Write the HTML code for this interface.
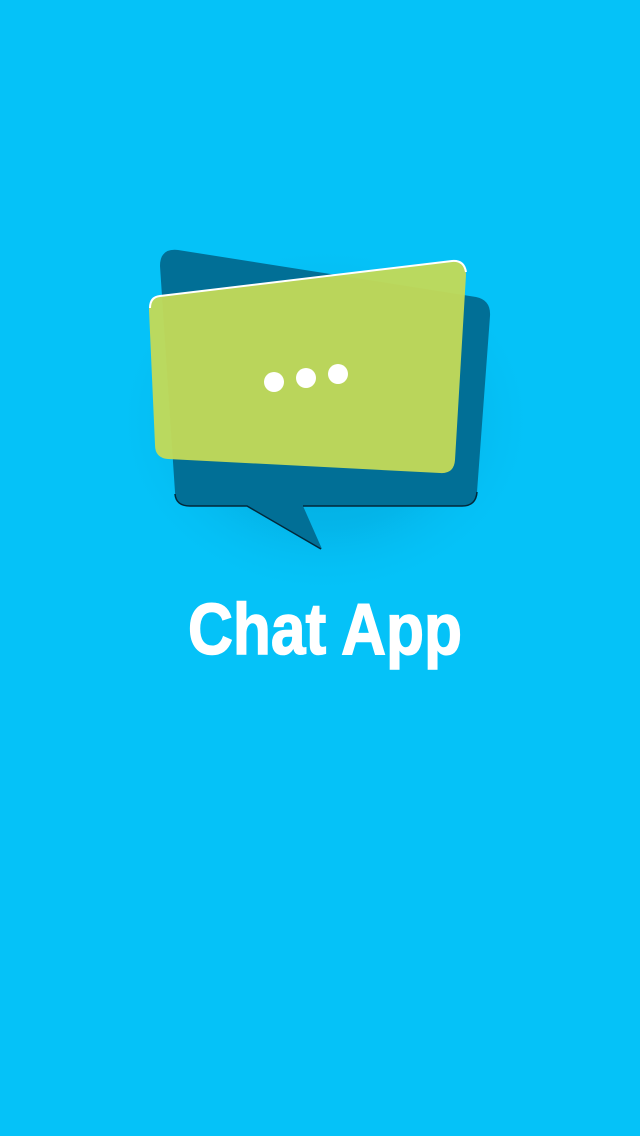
<!DOCTYPE html>
<html><head><style>
html,body{margin:0;padding:0;width:640px;height:1136px;background:#05c2f8;overflow:hidden}
</style></head><body>
<svg width="640" height="1136" viewBox="0 0 640 1136" style="position:absolute;left:0;top:0">
<defs>
<radialGradient id="sh" cx="0.5" cy="0.5" r="0.5">
<stop offset="0" stop-color="#0390bf" stop-opacity="0.55"/>
<stop offset="0.6" stop-color="#0390bf" stop-opacity="0.25"/>
<stop offset="1" stop-color="#05c2f8" stop-opacity="0"/>
</radialGradient>
</defs>
<ellipse cx="325" cy="420" rx="215" ry="180" fill="url(#sh)"/>
<path d="M178 250 L476 297 Q491 300 490 316 L477 492 Q476 506 462 506 L303 506 L322 549 L247 506 L190 506 Q175 506 175 492 L160 266 Q160 248 178 250 Z" fill="#016f96"/>
<path d="M175 494 Q176 506 190 506 L247 506 L321 549" fill="none" stroke="#02283a" stroke-width="1.5"/>
<path d="M303 506 L462 506 Q476 506 477 492" fill="none" stroke="#02283a" stroke-width="1.5"/>
<path d="M160 296 L452 261 Q466 260 466 275 L455 460 Q454 474 440 473 L168 459 Q155 458 155 445 L149 310 Q149 297 160 296 Z" fill="#c2da58" fill-opacity="0.96"/>
<path d="M150 308 Q150 297 160 296 L452 261 Q464 260 466 272" fill="none" stroke="#fff" stroke-width="2"/>
<circle cx="274" cy="382" r="10" fill="#fff"/>
<circle cx="306" cy="378" r="10" fill="#fff"/>
<circle cx="338" cy="374" r="10" fill="#fff"/>
<text x="188" y="654" textLength="274" lengthAdjust="spacingAndGlyphs" font-family="Liberation Sans, sans-serif" font-weight="bold" font-size="72" fill="#fff" stroke="#fff" stroke-width="1.5">Chat App</text>
</svg>
</body></html>
